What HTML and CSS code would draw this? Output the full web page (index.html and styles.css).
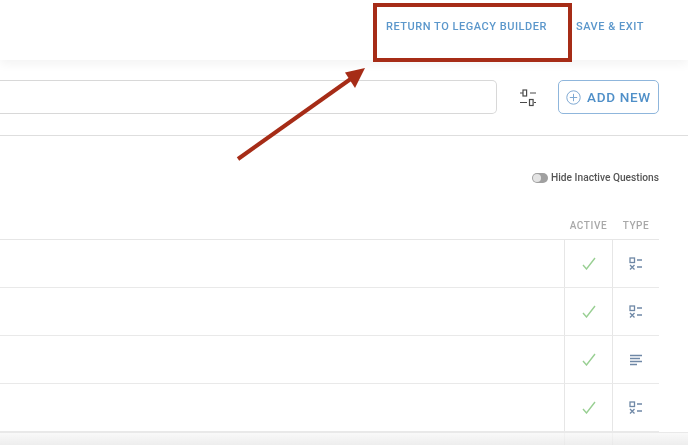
FILE: index.html
```html
<!DOCTYPE html>
<html lang="en">
<head>
<meta charset="utf-8">
<title>Questions</title>
<link rel="stylesheet" href="styles.css">
</head>
<body>
<div class="page">
  <header class="topbar">
    <a class="top-link legacy">RETURN TO LEGACY BUILDER</a>
    <a class="top-link">SAVE &amp; EXIT</a>
  </header>
  <section class="toolbar">
    <div class="search"></div>
    <svg class="filter" width="20" height="20" viewBox="0 0 20 20" fill="none" stroke="#4a4a4a" stroke-width="1.2">
      <rect x="5" y="2" width="3.6" height="6"/><path d="M2 5h3M12 5h6M2 14.500h7M16 14.500h2"/><rect x="11.500" y="11.500" width="3.600" height="6"/>
    </svg>
    <button class="add">
      <svg width="15" height="15" viewBox="0 0 15 15" fill="none" stroke="#7fa9d3" stroke-width="1"><circle cx="7.500" cy="7.500" r="6.700"/><path d="M7.500 3.800v7.400M3.800 7.500h7.400"/></svg>
      <span>ADD NEW</span>
    </button>
  </section>
  <div class="filters">
    <span class="toggle"><i></i></span>
    <span class="toggle-label">Hide Inactive Questions</span>
  </div>
  <div class="table">
    <div class="row head"><div class="c main"></div><div class="c active">ACTIVE</div><div class="c type">TYPE</div></div>
    <div class="row">
      <div class="c main"></div>
      <div class="c active"><svg class="check" width="14" height="13" viewBox="0 0 14 13"><path d="M1 8l3.500 4L13 1"/></svg></div>
      <div class="c type"><svg class="ti" width="14" height="13" viewBox="0 0 14 13"><rect x="1" y="1" width="4.500" height="4.500"/><path d="M8 3h5M8 10h5M1 8l4.500 4.500M5.500 8L1 12.500"/></svg></div>
    </div>
    <div class="row">
      <div class="c main"></div>
      <div class="c active"><svg class="check" width="14" height="13" viewBox="0 0 14 13"><path d="M1 8l3.500 4L13 1"/></svg></div>
      <div class="c type"><svg class="ti" width="14" height="13" viewBox="0 0 14 13"><rect x="1" y="1" width="4.500" height="4.500"/><path d="M8 3h5M8 10h5M1 8l4.500 4.500M5.500 8L1 12.500"/></svg></div>
    </div>
    <div class="row">
      <div class="c main"></div>
      <div class="c active"><svg class="check" width="14" height="13" viewBox="0 0 14 13"><path d="M1 8l3.500 4L13 1"/></svg></div>
      <div class="c type"><svg class="ti" width="14" height="12" viewBox="0 0 14 12"><path d="M1 1.500h12M1 4.500h10M1 7.500h12M1 10.500h7"/></svg></div>
    </div>
    <div class="row">
      <div class="c main"></div>
      <div class="c active"><svg class="check" width="14" height="13" viewBox="0 0 14 13"><path d="M1 8l3.500 4L13 1"/></svg></div>
      <div class="c type"><svg class="ti" width="14" height="13" viewBox="0 0 14 13"><rect x="1" y="1" width="4.500" height="4.500"/><path d="M8 3h5M8 10h5M1 8l4.500 4.500M5.500 8L1 12.500"/></svg></div>
    </div>
    <div class="row"><div class="c main"></div><div class="c active"></div><div class="c type"></div></div>
  </div>
  <div class="bottom-fade"></div>
  <div class="callout"></div>
  <svg class="arrow" width="688" height="445" viewBox="0 0 688 445">
    <path d="M238 159L352 78" stroke="#a62c17" stroke-width="4" fill="none"/>
    <path d="M365 68L345 72.500L355 88Z" fill="#a62c17"/>
  </svg>
</div>
</body>
</html>
```
FILE: styles.css
```css
* { box-sizing: border-box; }
html, body { margin: 0; padding: 0; background: #fff; }
body { width: 688px; height: 445px; overflow: hidden; font-family: Roboto, "Liberation Sans", sans-serif; }
.page { position: relative; width: 688px; height: 445px; overflow: hidden; background: #fff; filter: blur(.35px); }
.topbar {
  height: 60px; display: flex; justify-content: flex-end; align-items: flex-start;
  padding: 20px 44px 0 0; gap: 29px; background: #fff;
  box-shadow: 0 4px 10px rgba(0,0,0,.05);
}
.top-link { font-size: 11px; font-weight: 500; line-height: 14px; letter-spacing: .53px; color: #5b97cb; }
.toolbar { height: 76px; display: flex; align-items: center; padding: 0 29px 1px 0; border-bottom: 1px solid #dedede; }
.search { flex: 1; height: 34px; border: 1px solid #d8d8d8; border-left: 0; border-radius: 0 5px 5px 0; }
.filter { margin: 1px 20px 0 21px; }
.add {
  width: 101px; height: 34px; display: flex; align-items: center; gap: 6px; padding: 0 0 0 7px;
  background: #fff; border: 1px solid #8fb6dc; border-radius: 5px; color: #4f8fc8;
  font: 500 13.500px/16px Roboto, "Liberation Sans", sans-serif; letter-spacing: .7px;
}
.filters { height: 84px; display: flex; align-items: flex-start; justify-content: flex-end; gap: 3px; padding: 35px 29px 0 0; }
.toggle { width: 16px; height: 10px; margin-top: 2px; border-radius: 5px; background: #a0a0a0; display: flex; align-items: center; padding-left: 1px; }
.toggle i { width: 8px; height: 8px; border-radius: 50%; background: #e4e4e4; }
.toggle-label { font-size: 10.200px; font-weight: 500; line-height: 13px; color: #555; }
.table { width: 659px; }
.row { height: 48px; display: flex; border-bottom: 1px solid #e9e9e9; }
.row.head { height: 20px; border-bottom: 1px solid #e6e6e6; align-items: flex-start; }
.c { display: flex; align-items: center; justify-content: center; height: 100%; }
.main { flex: 1; }
.active { width: 49px; }
.type { width: 46px; }
.row:not(.head) .active { border-left: 1px solid #e6e6e6; border-right: 1px solid #e6e6e6; }
.head .c { font-size: 10px; font-weight: 500; line-height: 12px; letter-spacing: .6px; color: #a8a8a8; height: auto; }
.check { fill: none; stroke: #98cf92; stroke-width: 1.400; }
.ti { fill: none; stroke: #6f88a6; stroke-width: 1.300; }
.bottom-fade {
  position: absolute; left: 0; right: 0; bottom: 0; height: 13px;
  background: linear-gradient(#f7f7f7bb, #e9e9e9cc); border-top: 1px solid #e9e9e9;
}
.callout { position: absolute; left: 373px; top: 3px; width: 199px; height: 59px; border: 4px solid #a62c17; }
.arrow { position: absolute; left: 0; top: 0; pointer-events: none; }
```
